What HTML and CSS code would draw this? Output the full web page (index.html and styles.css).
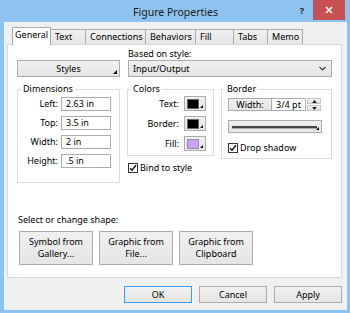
FILE: index.html
```html
<!DOCTYPE html>
<html>
<head>
<meta charset="utf-8">
<link rel="stylesheet" href="styles.css">
</head>
<body>
<div class="window">
  <div class="titlebar">
    <span class="title">Figure Properties</span>
    <div class="caption">
      <span class="help">?</span>
      <span class="close"><svg width="8" height="8" viewBox="0 0 8 8"><path d="M1 1L7 7M7 1L1 7" stroke="#fff" stroke-width="1.6"/></svg></span>
    </div>
  </div>
  <div class="dialog">
    <div class="tabs">
      <div class="tab active t-general">General</div>
      <div class="tab t-text">Text</div>
      <div class="tab t-conn">Connections</div>
      <div class="tab t-beh">Behaviors</div>
      <div class="tab t-fill">Fill</div>
      <div class="tab t-tabs">Tabs</div>
      <div class="tab t-memo">Memo</div>
    </div>
    <div class="panel">
      <div class="style-row">
        <span></span>
        <span class="caption-label">Based on style:</span>
        <button class="btn menu-btn">Styles<svg class="grip" width="4" height="4" viewBox="0 0 4 4"><polygon points="4,0 4,4 0,4" fill="#000"/></svg></button>
        <div class="select">Input/Output<svg class="chev" width="7" height="5" viewBox="0 0 7 5"><path d="M0.5 0.8L3.5 3.8L6.5 0.8" fill="none" stroke="#333" stroke-width="1.2"/></svg></div>
      </div>
      <div class="groups">
        <fieldset class="group dims">
          <legend>Dimensions</legend>
          <div class="dims-grid">
            <span class="lbl">Left:</span><span class="input">2.63 in</span>
            <span class="lbl">Top:</span><span class="input">3.5 in</span>
            <span class="lbl">Width:</span><span class="input">2 in</span>
            <span class="lbl">Height:</span><span class="input">.5 in</span>
          </div>
        </fieldset>
        <div class="mid-col">
          <fieldset class="group colors">
            <legend>Colors</legend>
            <div class="colors-grid">
              <span class="lbl">Text:</span><span class="btn swatch"><span class="chip black"></span><svg class="grip" width="3" height="3" viewBox="0 0 4 4"><polygon points="4,0 4,4 0,4" fill="#000"/></svg></span>
              <span class="lbl">Border:</span><span class="btn swatch"><span class="chip black"></span><svg class="grip" width="3" height="3" viewBox="0 0 4 4"><polygon points="4,0 4,4 0,4" fill="#000"/></svg></span>
              <span class="lbl">Fill:</span><span class="btn swatch"><span class="chip lilac"></span><svg class="grip" width="3" height="3" viewBox="0 0 4 4"><polygon points="4,0 4,4 0,4" fill="#000"/></svg></span>
            </div>
          </fieldset>
          <div class="check bind"><span class="box"><svg width="8" height="8" viewBox="0 0 8 8"><path d="M1 4.2L3 6.3L7 1.2" fill="none" stroke="#111" stroke-width="1.4"/></svg></span>Bind to style</div>
        </div>
        <fieldset class="group borderbox">
          <legend>Border</legend>
          <div class="border-inner">
            <div class="width-row">
              <span class="btn width-btn">Width:</span>
              <span class="input width-input">3/4 pt</span>
              <span class="spin">
                <span class="spin-btn"><svg width="5" height="3" viewBox="0 0 5 3"><polygon points="0,3 5,3 2.5,0" fill="#222"/></svg></span>
                <span class="spin-btn"><svg width="5" height="3" viewBox="0 0 5 3"><polygon points="0,0 5,0 2.5,3" fill="#222"/></svg></span>
              </span>
            </div>
            <div class="btn line-btn"><span class="line"></span><svg class="grip" width="3" height="3" viewBox="0 0 4 4"><polygon points="4,0 4,4 0,4" fill="#000"/></svg></div>
            <div class="check"><span class="box"><svg width="8" height="8" viewBox="0 0 8 8"><path d="M1 4.2L3 6.3L7 1.2" fill="none" stroke="#111" stroke-width="1.4"/></svg></span>Drop shadow</div>
          </div>
        </fieldset>
      </div>
      <div class="shape-label">Select or change shape:</div>
      <div class="shape-buttons">
        <button class="btn shape-btn">Symbol from<br>Gallery...</button>
        <button class="btn shape-btn">Graphic from<br>File...</button>
        <button class="btn shape-btn">Graphic from<br>Clipboard</button>
      </div>
    </div>
    <div class="footer">
      <button class="btn foot-btn default">OK</button>
      <button class="btn foot-btn">Cancel</button>
      <button class="btn foot-btn">Apply</button>
    </div>
  </div>
</div>
</body>
</html>
```
FILE: styles.css
```css
* { box-sizing: border-box; }
html, body { margin: 0; padding: 0; }
body {
  width: 350px; height: 313px; overflow: hidden;
  font-family: "Noto Sans", "Open Sans", sans-serif;
  font-size: 9px; line-height: 12px; color: #000;
}
.window {
  width: 350px; height: 313px;
  background: #8fc3ef;
  padding: 0 3px 3px 4px;
  display: flex; flex-direction: column;
}
.titlebar {
  height: 22px; position: relative;
  display: flex; align-items: center; justify-content: center;
}
.title { font-size: 10.5px; color: #1b1b1b; line-height: 14px; padding-top: 1px; }
.caption { position: absolute; right: 2px; top: 0; display: flex; align-items: flex-start; }
.help { font-weight: bold; font-size: 9px; color: #222; width: 14px; text-align: center; margin-top: 5px; margin-right: 4px; }
.close {
  width: 32px; height: 20px; background: #c75050;
  display: flex; align-items: center; justify-content: center;
}
.dialog {
  flex: 1; background: #f0f0f0;
  display: flex; flex-direction: column;
  padding: 0 5px 0 3px;
}
.tabs { height: 22px; display: flex; align-items: flex-end; padding-left: 5px; position: relative; z-index: 1; }
.tab {
  height: 15px; border: 1px solid #acacac; border-bottom: none;
  background: linear-gradient(#f0f0f0, #e5e5e5);
  padding-left: 4px; line-height: 14px; margin-left: -1px;
}
.tab.active {
  height: 18px; background: #fff; margin-bottom: -1px; margin-left: 0;
  padding-left: 2px; line-height: 12px; padding-top: 1px; position: relative; z-index: 2;
}
.t-general { width: 39px; }
.t-text { width: 36px; }
.t-conn { width: 61px; }
.t-beh { width: 51px; }
.t-fill { width: 39px; }
.t-tabs { width: 35px; }
.t-memo { width: 36px; }
.panel {
  flex: 1; background: #fff; border: 1px solid #d9d9d9;
  padding: 2px 9px 0 9px;
}
.style-row {
  display: grid; grid-template-columns: 103px 1fr; column-gap: 8px;
}
.caption-label { line-height: 13px; }
.btn {
  font-family: inherit; font-size: 9px; line-height: 12px; color: #000;
  background: linear-gradient(#f0f0f0, #e5e5e5);
  border: 1px solid #acacac; border-radius: 0; padding: 0; margin: 0;
}
.menu-btn { height: 17px; position: relative; text-align: center; }
.grip { position: absolute; right: 2px; bottom: 2px; }
.select {
  height: 17px; border: 1px solid #acacac;
  background: linear-gradient(#f0f0f0, #e5e5e5);
  display: flex; align-items: center; justify-content: space-between;
  padding: 0 5px 0 4px;
}
.groups {
  display: grid; grid-template-columns: 103px 87px 1fr; column-gap: 7px;
  margin-top: 6px; align-items: start;
}
.borderbox { margin-left: 1px; }
.group { border: 1px solid #dcdcdc; margin: 0; padding: 0; min-width: 0; }
.group legend { padding: 0 2px; margin-left: 3px; line-height: 12px; }
.dims-grid {
  display: grid; grid-template-columns: 40px 50px; column-gap: 3px; row-gap: 5px;
  padding: 2px 8px 14px 0; align-items: center;
}
.lbl { text-align: right; }
.input {
  height: 14px; border: 1px solid #abadb3; background: #fff;
  padding-left: 4px; line-height: 12px; display: block;
}
.colors-grid {
  display: grid; grid-template-columns: 1fr 22px; column-gap: 5px; row-gap: 5px;
  padding: 1px 7px 4px 0; align-items: center;
}
.swatch { height: 15px; position: relative; display: block; }
.chip { position: absolute; left: 2px; top: 2px; width: 12px; height: 10px; border: 1px solid #666; }
.chip.black { background: #000; }
.chip.lilac { background: #c9a3f3; border-color: #9a88b0; }
.check { display: flex; align-items: center; gap: 2px; height: 12px; }
.bind { margin-top: 6px; margin-left: 1px; }
.box {
  width: 10px; height: 10px; border: 1px solid #333; background: #fff;
  display: flex; align-items: center; justify-content: center;
}
.border-inner { padding: 3px 10px 4px 6px; display: flex; flex-direction: column; }
.width-row { display: flex; height: 13px; }
.width-btn { width: 44px; height: 13px; text-align: center; display: block; }
.width-input { width: 34px; height: 13px; text-align: center; padding-left: 0; border-left: none; line-height: 11px; }
.spin { width: 14px; display: flex; flex-direction: column; margin-left: 1px; gap: 1px; }
.spin-btn {
  flex: 1; background: linear-gradient(#f4f4f4, #e3e3e3); border: 1px solid #c4c4c4;
  display: flex; align-items: center; justify-content: center;
}
.line-btn { margin-top: 9px; height: 13px; width: 94px; position: relative; display: flex; align-items: center; padding: 0 4px 0 3px; }
.line { display: block; height: 2px; width: 86px; background: #444; box-shadow: 0 1px 0 #aaa; }
.border-inner .check { margin-top: 9px; }
.shape-label { margin-top: 31px; line-height: 12px; padding-left: 1px; }
.shape-buttons { display: flex; gap: 6px; margin-top: 5px; padding-left: 2px; }
.shape-btn { width: 74px; height: 34px; text-align: center; line-height: 12px; }
.footer {
  height: 32px; display: flex; justify-content: flex-end; gap: 7px;
  padding-top: 8px; padding-bottom: 7px;
}
.foot-btn { width: 68px; height: 17px; }
.foot-btn.default { border-color: #3c9cf0; }
```
